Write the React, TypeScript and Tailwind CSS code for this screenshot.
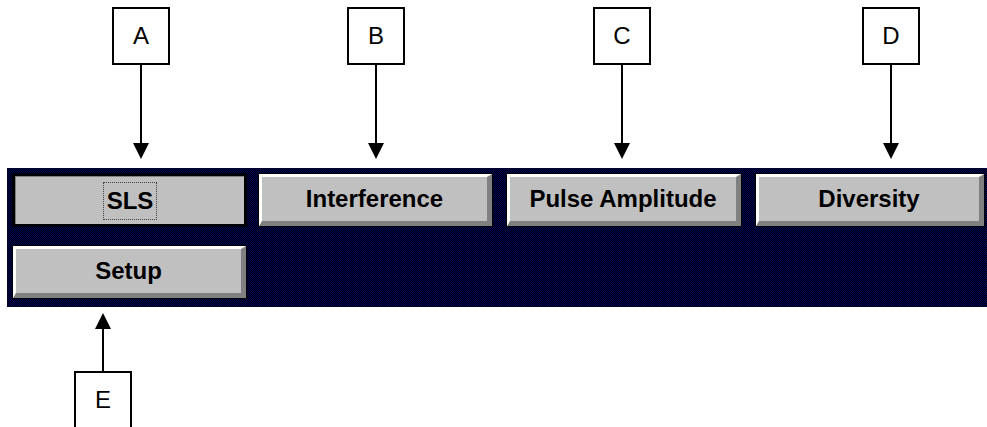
import React from "react";

const font = { fontFamily: '"Liberation Sans", Arial, sans-serif' };

function DownCallout({ label, className }: { label: string; className: string }) {
  return (
    <div className={`flex flex-col items-center w-[58px] ${className}`}>
      <div className="w-[58px] h-[58px] border-2 border-black flex items-center justify-center text-[24px] leading-none text-black bg-white">
        {label}
      </div>
      <div className="w-[2px] h-[78px] bg-black" />
      <svg width="16" height="16" viewBox="0 0 16 16" className="block">
        <polygon points="0,0 16,0 8,16" fill="black" />
      </svg>
    </div>
  );
}

function UpCallout({ label, className }: { label: string; className: string }) {
  return (
    <div className={`flex flex-col items-center w-[58px] ${className}`}>
      <svg width="16" height="16" viewBox="0 0 16 16" className="block">
        <polygon points="8,0 16,16 0,16" fill="black" />
      </svg>
      <div className="w-[2px] h-[42px] bg-black" />
      <div className="w-[58px] h-[58px] border-2 border-black flex items-center justify-center text-[24px] leading-none text-black bg-white">
        {label}
      </div>
    </div>
  );
}

function Button({ label, className }: { label: string; className: string }) {
  return (
    <div className={`h-[54px] border border-black ${className}`}>
      <div className="h-full border-t-[3px] border-l-[3px] border-t-white border-l-white border-b-[5px] border-r-[5px] border-b-[#808080] border-r-[#808080] bg-[#c0c0c0] flex items-center justify-center">
        <span className="text-[24px] font-bold leading-none text-black">{label}</span>
      </div>
    </div>
  );
}

function FocusedButton({ label, className }: { label: string; className: string }) {
  return (
    <div className={`h-[54px] border-[3px] border-black ${className}`}>
      <div className="h-full border-t border-l border-[#808080] border-b-0 border-r-0 bg-[#c0c0c0] flex items-center justify-center">
        <span className="h-[38px] px-[3px] border border-dotted border-[#404040] flex items-center text-[24px] font-bold leading-none text-black">
          {label}
        </span>
      </div>
    </div>
  );
}

export default function App() {
  return (
    <div className="w-[987px] h-[427px] overflow-hidden bg-white" style={font}>
      <div className="h-[168px] pt-[7px] flex items-start">
        <DownCallout label="A" className="ml-[112px]" />
        <DownCallout label="B" className="ml-[177px]" />
        <DownCallout label="C" className="ml-[188px]" />
        <DownCallout label="D" className="ml-[211px]" />
      </div>
      <div className="ml-[7px] w-[980px] h-[139px] pt-[5px] pl-[5px] flex flex-col gap-[18px] bg-[#000040] bg-[conic-gradient(#00005c_25%,#000008_0_50%,#00005c_0_75%,#000008_0)] bg-size-[2px_2px]">
        <div className="flex">
          <FocusedButton label="SLS" className="w-[235px]" />
          <Button label="Interference" className="ml-[11px] w-[235px]" />
          <Button label="Pulse Amplitude" className="ml-[13px] w-[236px]" />
          <Button label="Diversity" className="ml-[13px] w-[230px]" />
        </div>
        <div className="flex">
          <Button label="Setup" className="w-[235px]" />
        </div>
      </div>
      <div className="pt-[6px] flex">
        <UpCallout label="E" className="ml-[74px]" />
      </div>
    </div>
  );
}
